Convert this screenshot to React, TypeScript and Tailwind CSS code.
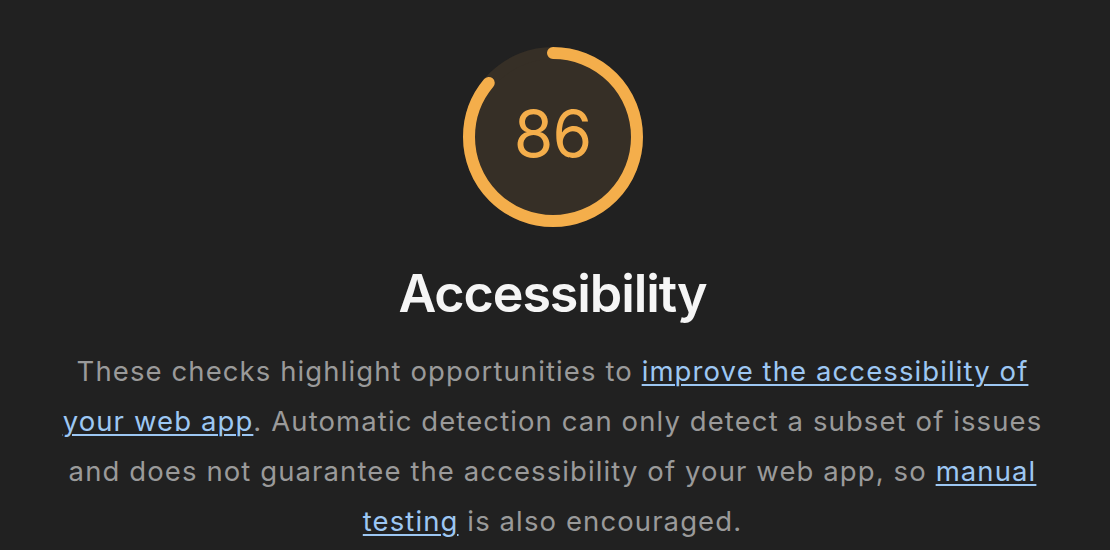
import React from 'react';

const score = 86;

// Lighthouse-style score ring: base disk plus a clockwise arc starting at 12 o'clock
const Gauge: React.FC<{ value: number }> = ({ value }) => {
  const r = 56;
  const circumference = 2 * Math.PI * r;
  const dash = (value / 100) * circumference;

  return (
    <div className="relative w-[180px] h-[180px]">
      <svg viewBox="0 0 120 120" className="w-full h-full">
        <circle cx="60" cy="60" r={r} fill="#362f26" stroke="#362f26" strokeWidth="8" />
        <circle
          cx="60"
          cy="60"
          r={r}
          fill="none"
          stroke="#f4ae4b"
          strokeWidth="8"
          strokeLinecap="round"
          strokeDasharray={`${dash} ${circumference}`}
          transform="rotate(-90 60 60)"
        />
      </svg>
      <div className="absolute inset-0 flex items-center justify-center text-[#f4ae4b] text-[64px] leading-none font-['Inter',sans-serif] pb-[6px] tracking-[-1px]">
        {value}
      </div>
    </div>
  );
};

const Link: React.FC<{ children: React.ReactNode }> = ({ children }) => (
  <a href="#" className="text-[#9dc7f3] underline decoration-2 underline-offset-[3px]">
    {children}
  </a>
);

export default function App() {
  return (
    <div className="w-[1110px] h-[550px] bg-[#212121] overflow-hidden font-['Inter',sans-serif]">
      <div className="flex flex-col items-center pt-[47px] pr-[5px]">
        <Gauge value={score} />
        <h1 className="mt-[37px] text-[52px] leading-[60px] font-semibold text-[#f5f5f5] tracking-[-1.1px]">
          Accessibility
        </h1>
        <p className="mt-[22px] w-[1000px] text-center text-[27.5px] leading-[50px] text-[#9a9a9a] tracking-[1.1px]">
          These checks highlight opportunities to <Link>improve the accessibility of your web app</Link>.
          Automatic detection can only detect a subset of issues and does not guarantee the accessibility
          of your web app, so <Link>manual testing</Link> is also encouraged.
        </p>
      </div>
    </div>
  );
}
